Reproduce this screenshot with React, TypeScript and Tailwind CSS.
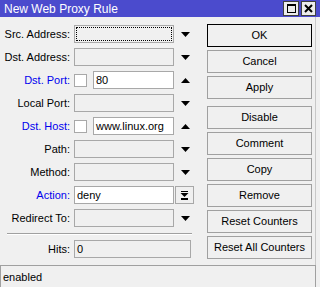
const FONT = "font-['Liberation_Sans',Arial,sans-serif]";

type Row = {
  label: string;
  blue?: boolean;
  kind: 'combo' | 'check' | 'action';
  value?: string;
  arrow?: 'down' | 'up';
  focus?: boolean;
};

const ROWS: Row[] = [
  { label: 'Src. Address:', kind: 'combo', arrow: 'down', focus: true },
  { label: 'Dst. Address:', kind: 'combo', arrow: 'down' },
  { label: 'Dst. Port:', blue: true, kind: 'check', value: '80', arrow: 'up' },
  { label: 'Local Port:', kind: 'combo', arrow: 'down' },
  { label: 'Dst. Host:', blue: true, kind: 'check', value: 'www.linux.org', arrow: 'up' },
  { label: 'Path:', kind: 'combo', arrow: 'down' },
  { label: 'Method:', kind: 'combo', arrow: 'down' },
  { label: 'Action:', blue: true, kind: 'action', value: 'deny' },
  { label: 'Redirect To:', kind: 'combo', arrow: 'down' },
];

const BUTTONS = [
  ['OK', 'Cancel', 'Apply'],
  ['Disable', 'Comment', 'Copy', 'Remove', 'Reset Counters', 'Reset All Counters'],
];

function Arrow({ dir }: { dir: 'down' | 'up' }) {
  return (
    <svg width="9" height="5" viewBox="0 0 9 5" className="ml-[7px]">
      {dir === 'down' ? (
        <polygon points="0,0 9,0 4.5,5" fill="#000" />
      ) : (
        <polygon points="0,5 9,5 4.5,0" fill="#000" />
      )}
    </svg>
  );
}

function Field({ row }: { row: Row }) {
  if (row.kind === 'check') {
    return (
      <div className="flex items-center">
        <div className="w-[13px] h-[13px] bg-white border border-[#a8a8a8]" />
        <div className="ml-[6px] w-[81px] h-[18px] bg-white border border-[#a8a8a8] px-[2px] flex items-center">
          {row.value}
        </div>
        <Arrow dir={row.arrow!} />
      </div>
    );
  }
  if (row.kind === 'action') {
    return (
      <div className="flex items-center">
        <div className="w-[100px] h-[18px] bg-white border border-[#a8a8a8] px-[2px] flex items-center">
          {row.value}
        </div>
        <div className="ml-[1px] w-[19px] h-[18px] border border-[#a8a8a8] flex items-center justify-center">
          <svg width="9" height="9" viewBox="0 0 9 9">
            <rect x="1" y="0" width="7" height="1" fill="#000" />
            <polygon points="0.5,2 8.5,2 4.5,6" fill="#000" />
            <rect x="1" y="7" width="7" height="2" fill="#000" />
          </svg>
        </div>
      </div>
    );
  }
  return (
    <div className="flex items-center">
      <div className="w-[100px] h-[18px] border border-[#a8a8a8] p-[1px]">
        {row.focus && <div className="w-full h-full border border-dotted border-black" />}
      </div>
      <Arrow dir={row.arrow!} />
    </div>
  );
}

export default function App() {
  return (
    <div className={`w-[320px] h-[287px] overflow-hidden bg-[#f0f0f0] text-[11px] text-black leading-none ${FONT}`}>
      <div className="h-[17px] bg-[#4b4bcd] flex items-center justify-between pl-[4px] pr-[4px]">
        <span className="text-white text-[12px]">New Web Proxy Rule</span>
        <div className="flex gap-[2px] pt-[1px] self-start">
          <div className="w-[16px] h-[15px] bg-[#ececec] border border-[#404040] flex items-center justify-center">
            <div className="w-[9px] h-[9px] border border-black border-t-2" />
          </div>
          <div className="w-[15px] h-[15px] bg-[#ececec] border border-[#404040] flex items-center justify-center">
            <svg width="9" height="9" viewBox="0 0 9 9">
              <path d="M1 1 L8 8 M8 1 L1 8" stroke="#000" strokeWidth="2" />
            </svg>
          </div>
        </div>
      </div>

      <div className="flex w-[316px] h-[248px] border-r border-[#c8c8c8]">
        <div className="w-[207px] pt-[8px] flex flex-col">
          <div className="flex flex-col gap-[5px]">
            {ROWS.map((row) => (
              <div key={row.label} className="flex items-center h-[18px]">
                <span className={`w-[71px] text-right pr-[1px] ${row.blue ? 'text-[#0000ee]' : ''}`}>
                  {row.label}
                </span>
                <div className="ml-[3px]">
                  <Field row={row} />
                </div>
              </div>
            ))}
          </div>
          <div className="mt-[6px] ml-[7px] w-[185px] h-[2px] border-t border-[#a0a0a0] border-b border-b-white" />
          <div className="mt-[5px] flex items-center h-[18px]">
            <span className="w-[71px] text-right pr-[1px]">Hits:</span>
            <div className="ml-[3px] w-[117px] h-[18px] border border-[#a8a8a8] px-[2px] flex items-center">0</div>
          </div>
        </div>
        <div className="w-[105px] pt-[7px] flex flex-col gap-[7px]">
          {BUTTONS.map((group, gi) => (
            <div key={gi} className="flex flex-col gap-[3px]">
              {group.map((b) => (
                <div
                  key={b}
                  className={`h-[23px] flex items-center justify-center border ${
                    b === 'OK' ? 'border-black' : 'border-[#a0a0a0]'
                  }`}
                >
                  {b}
                </div>
              ))}
            </div>
          ))}
        </div>
      </div>

      <div className="w-[316px] h-[24px] border border-[#a0a0a0] px-[2px] flex items-center">enabled</div>
    </div>
  );
}
